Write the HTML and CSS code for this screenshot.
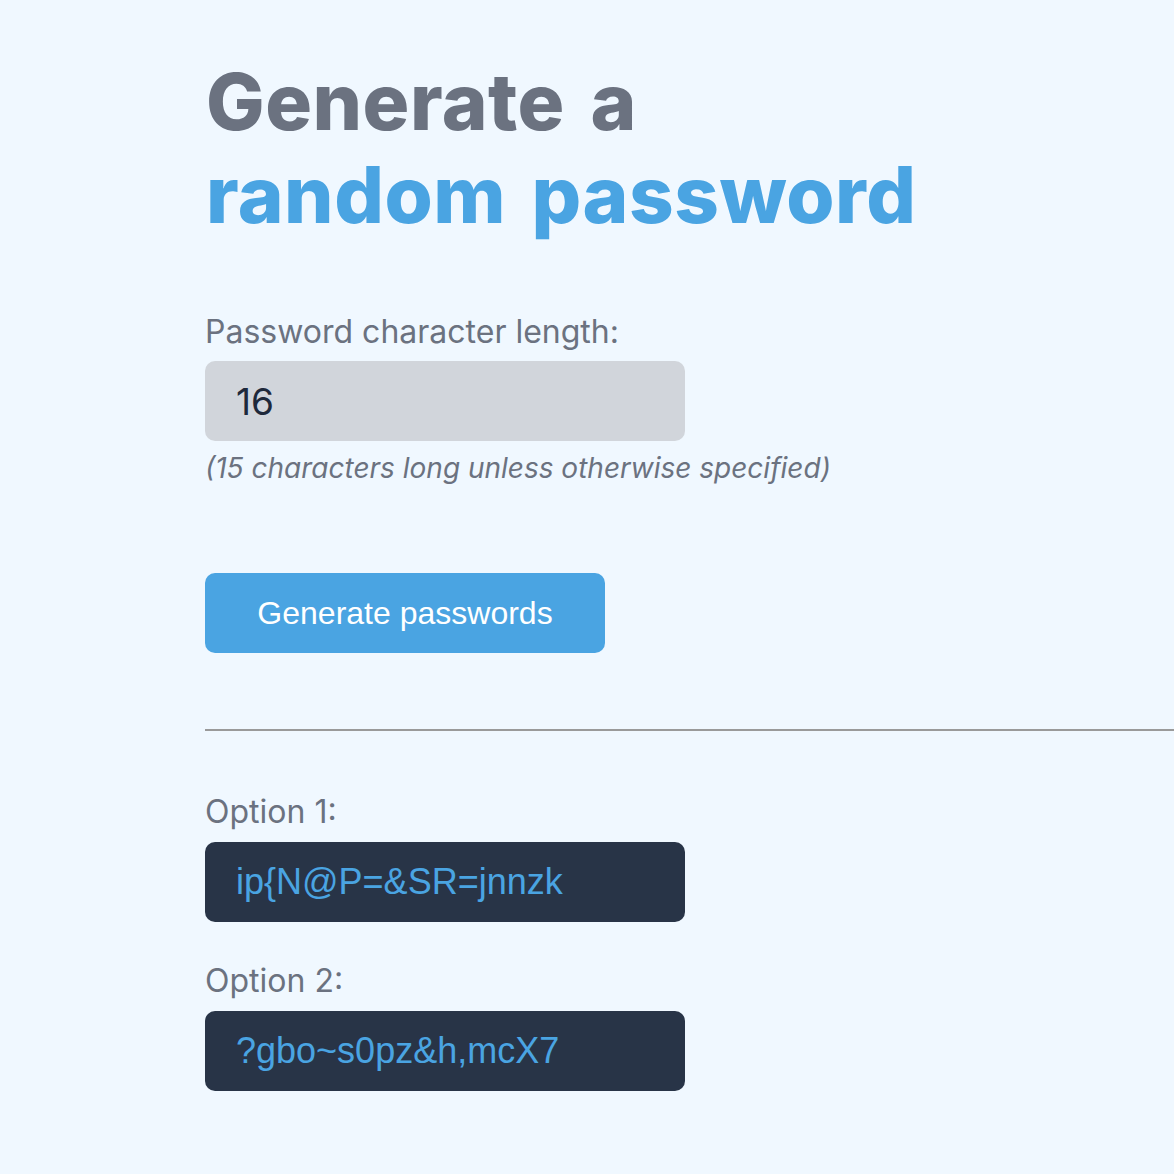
FILE: index.html
```html
<!DOCTYPE html>
<html lang="en">
<head>
<meta charset="utf-8">
<title>Password Generator</title>
<link rel="stylesheet" href="styles.css">
</head>
<body>
<main class="page">
  <h1 class="title">Generate a<br><span class="accent">random password</span></h1>

  <section class="length">
    <label class="label" for="len">Password character length:</label>
    <input class="length-input" id="len" type="text" value="16">
    <p class="hint">(15 characters long unless otherwise specified)</p>
  </section>

  <button class="generate">Generate passwords</button>

  <hr class="divider">

  <section class="results">
    <div class="option">
      <p class="label">Option 1:</p>
      <div class="pw">ip{N@P=&amp;SR=jnnzk</div>
    </div>
    <div class="option">
      <p class="label">Option 2:</p>
      <div class="pw">?gbo~s0pz&amp;h,mcX7</div>
    </div>
  </section>
</main>
</body>
</html>
```
FILE: styles.css
```css
html, body {
  margin: 0;
  padding: 0;
  background: #f0f8ff;
}
body {
  font-family: "Inter", "Noto Sans", sans-serif;
  overflow: hidden;
}
.page {
  padding: 55px 0 0 205px;
  display: flex;
  flex-direction: column;
  align-items: flex-start;
}
.title {
  margin: 0 0 0 1px;
  font-family: "Inter", sans-serif;
  font-weight: 800;
  font-size: 78px;
  line-height: 93px;
  letter-spacing: 0.5px;
  word-spacing: 8px;
  color: #6b7280;
}
.accent {
  color: #4aa4e2;
}
.length {
  margin-top: 71px;
  display: flex;
  flex-direction: column;
}
.label {
  margin: 0;
  font-size: 32px;
  line-height: 40px;
  color: #6b7280;
  display: block;
}
.length-input {
  margin-top: 9px;
  width: 480px;
  height: 80px;
  box-sizing: border-box;
  border: none;
  border-radius: 10px;
  background: #d1d5db;
  padding: 0 31px;
  font-family: "Inter", sans-serif;
  font-size: 37px;
  color: #1e293b;
  outline: none;
}
.hint {
  margin: 10px 0 0;
  font-size: 28px;
  line-height: 34px;
  font-style: italic;
  color: #6b7280;
}
.generate {
  margin-top: 88px;
  width: 400px;
  height: 80px;
  border: none;
  border-radius: 10px;
  background: #4aa4e2;
  color: #ffffff;
  font-family: "Liberation Sans", Arial, sans-serif;
  font-size: 32px;
  cursor: pointer;
}
.divider {
  margin: 76px 0 0;
  width: 969px;
  border: none;
  border-top: 2px solid #9a9a9a;
  height: 0;
}
.results {
  margin-top: 61px;
  display: flex;
  flex-direction: column;
  gap: 39px;
}
.option {
  display: flex;
  flex-direction: column;
}
.pw {
  margin-top: 10px;
  width: 480px;
  height: 80px;
  box-sizing: border-box;
  border-radius: 10px;
  background: #283447;
  padding: 0 31px;
  display: flex;
  align-items: center;
  font-family: "Liberation Sans", Arial, sans-serif;
  font-size: 36px;
  color: #4aa4e2;
}
```
